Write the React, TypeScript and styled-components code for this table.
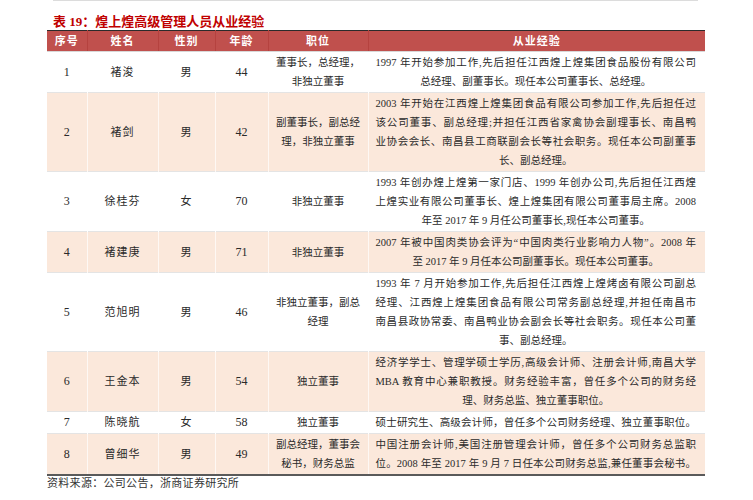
import styled, { createGlobalStyle } from "styled-components";

const GlobalStyle = createGlobalStyle`
  body {
    margin: 0;
    background: #ffffff;
    font-family: "Liberation Serif", "Noto Sans CJK SC", serif;
  }
`;

const Page = styled.div`
  width: 753px;
  padding: 0 48px 0 47px;
  box-sizing: border-box;
`;

const TopRule = styled.div`
  border-top: 1px solid #dcdcdc;
  margin: 0 7px 0 6px;
`;

const Title = styled.h2`
  margin: 12px 0 0 6px;
  font-size: 13px;
  line-height: 17px;
  font-weight: 700;
  color: #c00000;
  font-family: "Liberation Serif", "Noto Sans CJK SC", serif;
`;

const Table = styled.table`
  width: 658px;
  table-layout: fixed;
  border-collapse: collapse;
  border-top: 1px solid #2b2b2b;
  border-bottom: 2px solid #5a5a5a;
`;

const HeadCell = styled.th`
  height: 20px;
  padding: 0;
  background: #c0504d;
  color: #ffffff;
  font-size: 11px;
  font-weight: 700;
  line-height: 20px;
  letter-spacing: 1px;
  text-align: center;
  border-right: 1px solid #b5423f;
  border-bottom: 1px solid #d8d8d8;

  &:last-child {
    border-right: none;
  }
`;

const Row = styled.tr<{ $shaded?: boolean }>`
  background: ${({ $shaded }) => ($shaded ? "#fbe8db" : "#ffffff")};
  border-bottom: 1px solid #e4e4e4;

  &:last-child {
    border-bottom: none;
  }
`;

const Cell = styled.td<{ $wide?: boolean; $size?: number }>`
  padding: ${({ $wide }) => ($wide ? "1px 9px 1px 7px" : "1px 2px")};
  font-size: ${({ $size }) => $size ?? 10.5}px;
  line-height: 19px;
  color: #2a2a2a;
  text-align: center;
  vertical-align: middle;
  letter-spacing: ${({ $size }) => ($size === 11 ? "1px" : "0")};
  border-right: 1px solid rgba(255, 255, 255, 0.7);

  &:last-child {
    border-right: none;
  }
`;

const Line = styled.span<{ $fill?: boolean }>`
  display: block;
  white-space: nowrap;
  text-align: ${({ $fill }) => ($fill ? "justify" : "center")};
  text-align-last: ${({ $fill }) => ($fill ? "justify" : "center")};
`;

const Source = styled.p`
  margin: 0;
  font-size: 11px;
  line-height: 15px;
  letter-spacing: 0.3px;
  color: #333333;
`;

type Person = {
  no: string;
  name: string;
  gender: string;
  age: string;
  role: string[];
  exp: string[];
  full: number;
};

const people: Person[] = [
  {
    no: "1",
    name: "褚浚",
    gender: "男",
    age: "44",
    role: ["董事长，总经理，", "非独立董事"],
    exp: [
      "1997 年开始参加工作,先后担任江西煌上煌集团食品股份有限公司",
      "总经理、副董事长。现任本公司董事长、总经理。",
    ],
    full: 1,
  },
  {
    no: "2",
    name: "褚剑",
    gender: "男",
    age: "42",
    role: ["副董事长，副总经", "理，非独立董事"],
    exp: [
      "2003 年开始在江西煌上煌集团食品有限公司参加工作,先后担任过",
      "该公司董事、副总经理;并担任江西省家禽协会副理事长、南昌鸭",
      "业协会会长、南昌县工商联副会长等社会职务。现任本公司副董事",
      "长、副总经理。",
    ],
    full: 3,
  },
  {
    no: "3",
    name: "徐桂芬",
    gender: "女",
    age: "70",
    role: ["非独立董事"],
    exp: [
      "1993 年创办煌上煌第一家门店、1999 年创办公司,先后担任江西煌",
      "上煌实业有限公司董事长、煌上煌集团有限公司董事局主席。2008",
      "年至 2017 年 9 月任公司董事长,现任本公司董事。",
    ],
    full: 2,
  },
  {
    no: "4",
    name: "褚建庚",
    gender: "男",
    age: "71",
    role: ["非独立董事"],
    exp: [
      "2007 年被中国肉类协会评为“中国肉类行业影响力人物”。2008 年",
      "至 2017 年 9 月任本公司副董事长。现任本公司董事。",
    ],
    full: 1,
  },
  {
    no: "5",
    name: "范旭明",
    gender: "男",
    age: "46",
    role: ["非独立董事，副总", "经理"],
    exp: [
      "1993 年 7 月开始参加工作,先后担任江西煌上煌烤卤有限公司副总",
      "经理、江西煌上煌集团食品有限公司常务副总经理,并担任南昌市",
      "南昌县政协常委、南昌鸭业协会副会长等社会职务。现任本公司董",
      "事、副总经理。",
    ],
    full: 3,
  },
  {
    no: "6",
    name: "王金本",
    gender: "男",
    age: "54",
    role: ["独立董事"],
    exp: [
      "经济学学士、管理学硕士学历,高级会计师、注册会计师,南昌大学",
      "MBA 教育中心兼职教授。财务经验丰富，曾任多个公司的财务经",
      "理、财务总监、独立董事职位。",
    ],
    full: 2,
  },
  {
    no: "7",
    name: "陈晓航",
    gender: "女",
    age: "58",
    role: ["独立董事"],
    exp: ["硕士研究生、高级会计师，曾任多个公司财务经理、独立董事职位。"],
    full: 1,
  },
  {
    no: "8",
    name: "曾细华",
    gender: "男",
    age: "49",
    role: ["副总经理，董事会", "秘书，财务总监"],
    exp: [
      "中国注册会计师,美国注册管理会计师，曾任多个公司财务总监职",
      "位。2008 年至 2017 年 9 月 7 日任本公司财务总监,兼任董事会秘书。",
    ],
    full: 2,
  },
];

const headers = ["序号", "姓名", "性别", "年龄", "职位", "从业经验"];
const widths = [40, 71, 57, 53, 100, 337];

function App() {
  return (
    <>
      <GlobalStyle />
      <Page>
        <TopRule />
        <Title>表 19：煌上煌高级管理人员从业经验</Title>
        <Table>
          <colgroup>
            {widths.map((w, i) => (
              <col key={i} style={{ width: w }} />
            ))}
          </colgroup>
          <thead>
            <tr>
              {headers.map((h) => (
                <HeadCell key={h}>{h}</HeadCell>
              ))}
            </tr>
          </thead>
          <tbody>
            {people.map((p, i) => (
              <Row key={p.no} $shaded={i % 2 === 1}>
                <Cell $size={12}>{p.no}</Cell>
                <Cell $size={11}>{p.name}</Cell>
                <Cell $size={11}>{p.gender}</Cell>
                <Cell $size={12}>{p.age}</Cell>
                <Cell>
                  {p.role.map((r) => (
                    <Line key={r}>{r}</Line>
                  ))}
                </Cell>
                <Cell $wide>
                  {p.exp.map((l, j) => (
                    <Line key={j} $fill={j < p.full}>
                      {l}
                    </Line>
                  ))}
                </Cell>
              </Row>
            ))}
          </tbody>
        </Table>
        <Source>资料来源：公司公告，浙商证券研究所</Source>
      </Page>
    </>
  );
}

export default App;
